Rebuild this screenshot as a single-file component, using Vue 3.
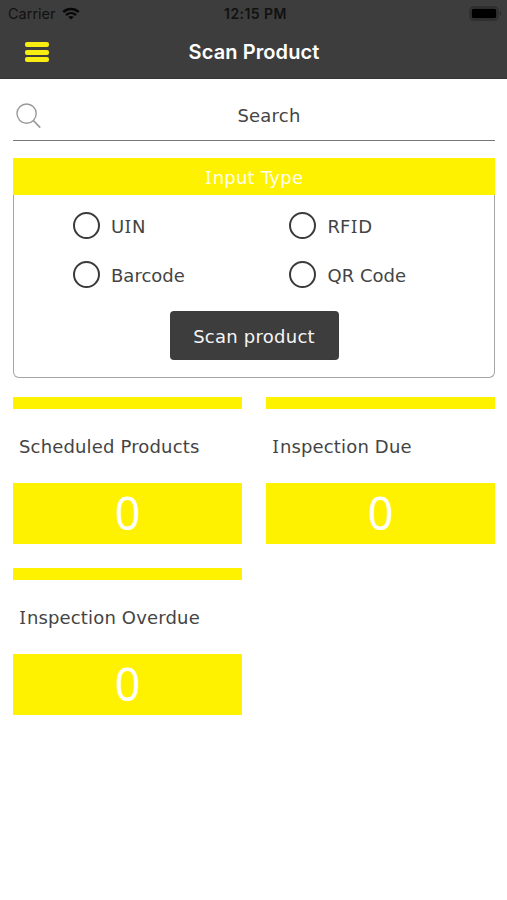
<script setup>
import { h } from 'vue'

const inputTypes = ['UIN', 'RFID', 'Barcode', 'QR Code']
const cards = [
  { title: 'Scheduled Products', count: 0 },
  { title: 'Inspection Due', count: 0 },
  { title: 'Inspection Overdue', count: 0 },
]

const Label = (props) =>
  h('span', { class: 'label' }, props.text.split(/(I)/).filter(Boolean).map((part) =>
    part === 'I' ? h('span', { class: 'label-i' }, part) : part
  ))
Label.props = ['text']
</script>

<template>
  <div class="screen">
    <header class="header">
      <div class="status">
        <div class="carrier">
          <span>Carrier</span>
          <svg width="18" height="13" viewBox="0 0 18 13" fill="none" stroke="#080808" stroke-width="2.4">
            <path d="M1.2 5C5.6.9 12.4.9 16.8 5" />
            <path d="M4 8.1C6.9 5.5 11.1 5.5 14 8.1" />
            <path d="M9 12.6 6.2 9.9C7.8 8.6 10.2 8.6 11.8 9.9Z" fill="#080808" stroke="none" />
          </svg>
        </div>
        <span class="time">12:15 PM</span>
        <svg class="battery" width="33" height="16" viewBox="0 0 33 16">
          <rect x="1" y="1" width="28" height="13" rx="3.5" fill="none" stroke="#2b2b2b" stroke-width="1.4" />
          <rect x="2.7" y="2.8" width="24.6" height="9.4" rx="1.6" fill="#000" />
          <path d="M30.8 5.5c1.8.5 1.8 3.5 0 4Z" fill="#2b2b2b" />
        </svg>
      </div>
      <div class="navbar">
        <button class="menu" aria-label="Menu"><i></i><i></i><i></i></button>
        <h1>Scan Product</h1>
      </div>
    </header>

    <main>
      <div class="search">
        <svg width="26" height="26" viewBox="0 0 26 26" fill="none" stroke="#999" stroke-width="1.4">
          <circle cx="10.6" cy="10.6" r="9.6" />
          <path d="M17.3 17.5 24.2 24.6" stroke-width="1.7" />
        </svg>
        <span>Search</span>
      </div>

      <section class="panel">
        <h2><Label text="Input Type" /></h2>
        <div class="options">
          <label v-for="type in inputTypes" :key="type" class="option">
            <span class="radio"></span>
            <Label :text="type" />
          </label>
        </div>
        <button class="scan">Scan product</button>
      </section>

      <section class="cards">
        <article v-for="card in cards" :key="card.title" class="card">
          <div class="bar"></div>
          <div class="title"><Label :text="card.title" /></div>
          <div class="count">{{ card.count }}</div>
        </article>
      </section>
    </main>
  </div>
</template>

<style>
body {
  background: #fff;
}
.label {
  white-space: pre;
}
.label-i {
  font-family: "Noto Sans", sans-serif;
  line-height: 1;
  font-size: 1.02em;
  letter-spacing: 0.06em;
  margin-left: 0.03em;
}
</style>

<style scoped>
.screen {
  width: 507px;
  height: 900px;
  overflow: hidden;
  background: #fff;
  color: #444;
  font: 18px/24px "DejaVu Sans", Verdana, sans-serif;
}
.header {
  height: 79px;
  box-sizing: border-box;
  background: #3d3d3d;
  border-bottom: 1px solid #353535;
  font-family: Inter, sans-serif;
}
.status {
  display: grid;
  grid-template-columns: 1fr auto 1fr;
  align-items: center;
  height: 27px;
  padding: 0 5px 0 8px;
  color: #111;
  font-size: 14.5px;
}
.carrier {
  display: flex;
  align-items: center;
  gap: 6px;
}
.time {
  padding-left: 1px;
  font-size: 14px;
  font-weight: 600;
  letter-spacing: 0.45px;
}
.battery {
  justify-self: end;
}
.navbar {
  display: grid;
  grid-template-columns: 60px 1fr 60px;
  align-items: center;
  height: 50px;
}
.menu {
  display: flex;
  flex-direction: column;
  gap: 2.5px;
  width: 24px;
  margin-left: 25px;
  padding: 0;
  border: 0;
  background: none;
}
.menu i {
  height: 5px;
  border-radius: 2px;
  background: #f8ec10;
}
h1 {
  margin: 0;
  padding-left: 1px;
  color: #fff;
  font-size: 20px;
  font-weight: 600;
  letter-spacing: 0.1px;
  text-align: center;
}
main {
  padding: 0 12px 0 13px;
}
.search {
  display: grid;
  grid-template-columns: 29px 1fr;
  align-items: center;
  height: 62px;
  box-sizing: border-box;
  padding: 12px 0 0 3px;
  border-bottom: 1.5px solid #777;
}
.search span {
  padding-right: 2px;
  letter-spacing: 0.2px;
  text-align: center;
}
.panel {
  display: flex;
  flex-direction: column;
  align-items: center;
  height: 220px;
  box-sizing: border-box;
  margin-top: 17px;
  border: 1px solid #a5a5a5;
  border-width: 0 1.5px 1.5px;
  border-radius: 0 0 6px 6px;
}
h2 {
  width: 482px;
  height: 37px;
  margin: 0;
  background: #fff200;
  color: #fffef0;
  font-size: 18px;
  font-weight: 400;
  letter-spacing: 0.25px;
  line-height: 40px;
  text-align: center;
}
.options {
  display: grid;
  grid-template-columns: 216.5px 1fr;
  grid-auto-rows: 27px;
  row-gap: 22px;
  align-self: stretch;
  padding: 17px 0 0 58.5px;
}
.option {
  display: flex;
  align-items: center;
  gap: 11.5px;
}
.option .label {
  padding-top: 2px;
}
.radio {
  width: 27px;
  height: 27px;
  box-sizing: border-box;
  border: 2.4px solid #3a3a3a;
  border-radius: 50%;
}
.scan {
  width: 169px;
  height: 49px;
  margin-top: 23px;
  padding: 2px 0 0;
  border: 0;
  border-radius: 4px;
  background: #3d3d3d;
  color: #f5f5f5;
  font: inherit;
  letter-spacing: 0.25px;
}
.cards {
  display: grid;
  grid-template-columns: 229px 229px;
  gap: 24px;
  margin-top: 18.6px;
}
.bar {
  height: 12.4px;
  background: #fff200;
}
.title {
  height: 73.6px;
  box-sizing: border-box;
  padding: 1px 0 0 6px;
  letter-spacing: 0.16px;
  line-height: 73px;
}
.count {
  height: 61px;
  background: #fff200;
  color: #fff;
  font-family: "Noto Sans", sans-serif;
  font-size: 45px;
  line-height: 60px;
  text-align: center;
}
</style>
